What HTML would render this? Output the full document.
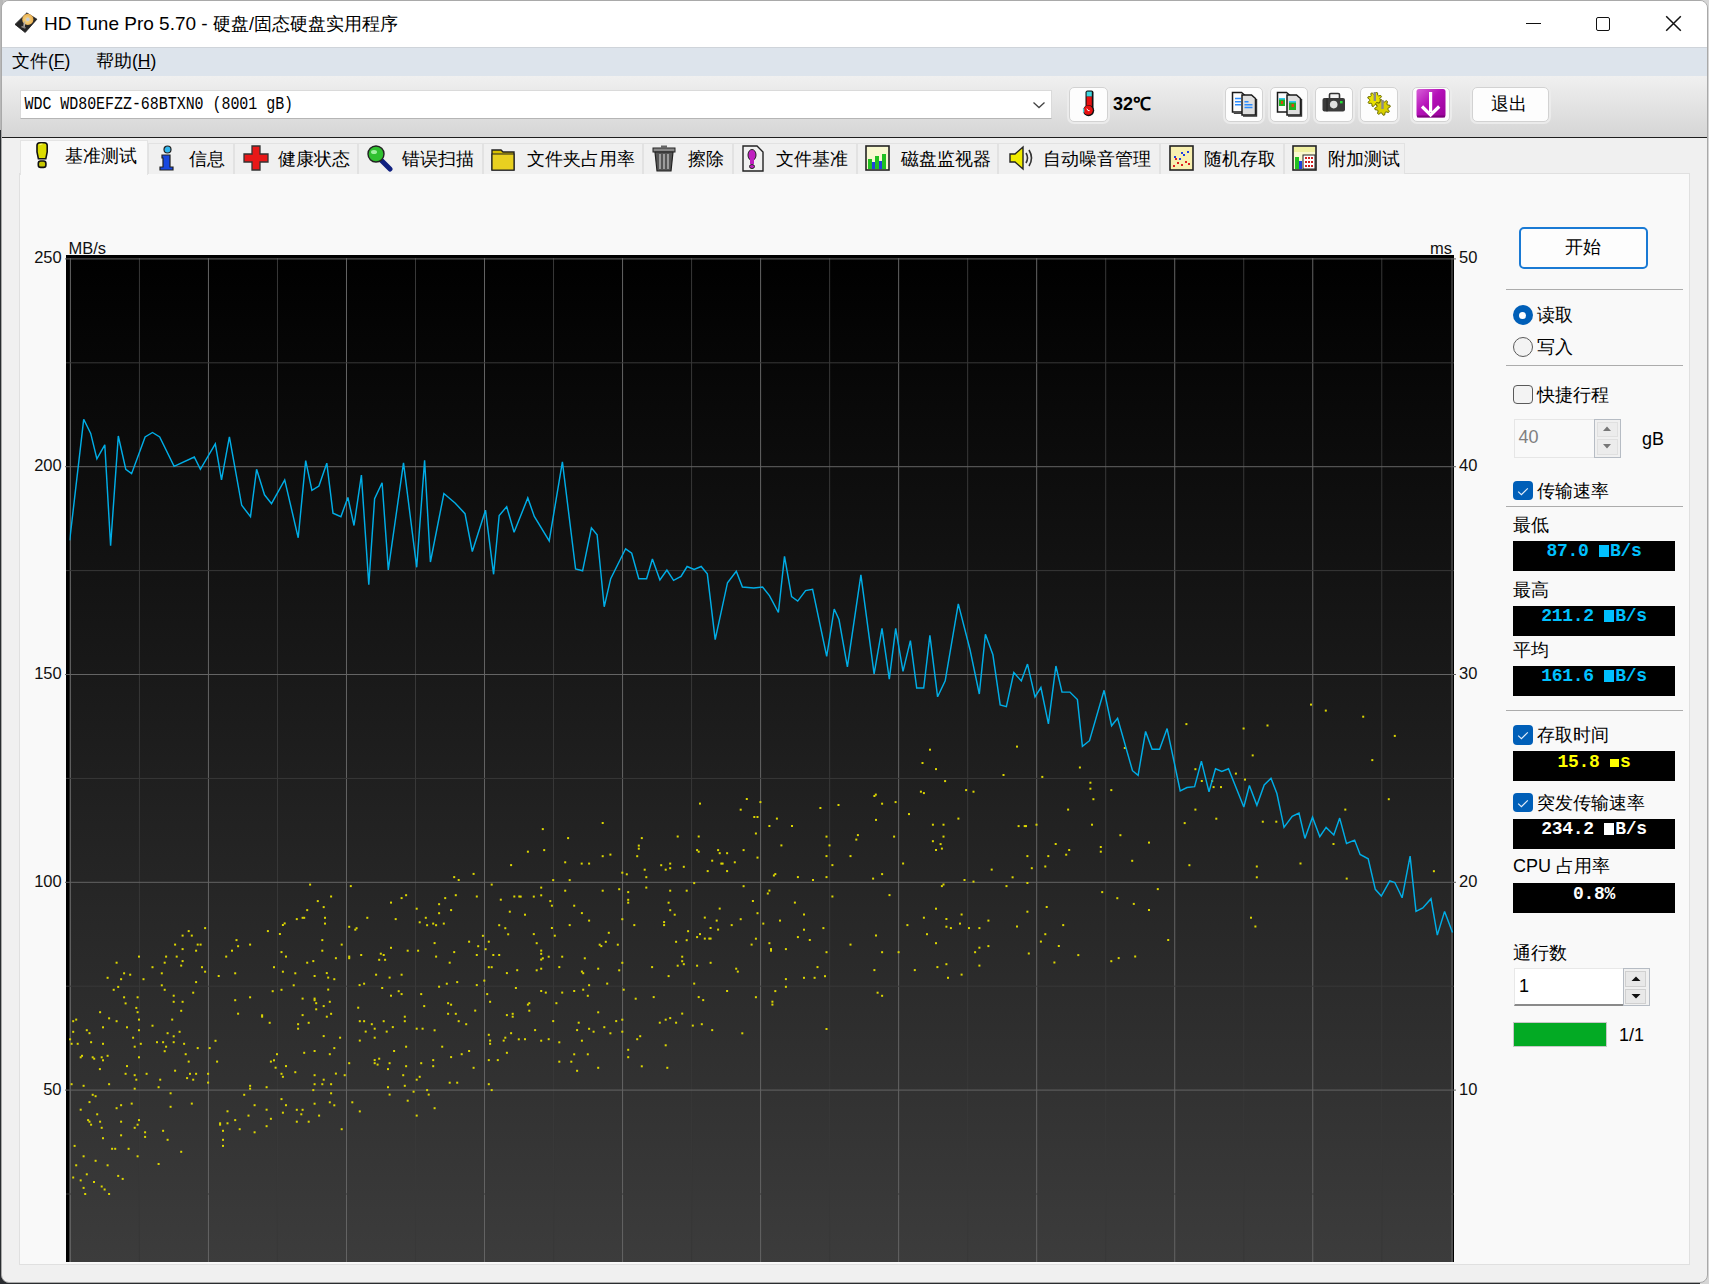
<!DOCTYPE html>
<html><head><meta charset="utf-8">
<style>
*{box-sizing:border-box;margin:0;padding:0}
html,body{width:1709px;height:1284px;overflow:hidden;background:#2a2d30}
body{position:relative;font-family:"Liberation Sans",sans-serif;color:#000}
.a{position:absolute}
.t{position:absolute;white-space:nowrap;line-height:1}
#win{position:absolute;left:1px;top:0;width:1707px;height:1283px;background:#f0f0f0;border:1px solid #a9a9a9;border-radius:8px;overflow:hidden}
#title{left:0;top:0;width:1705px;height:47px;background:#fff}
#menu{left:0;top:45.5px;width:1705px;height:29px;background:#dde4ec;border-top:1px solid #cfd4da}
#tool{left:0;top:75px;width:1705px;height:62px;background:linear-gradient(#f0f0f0,#d5d5d5)}
#tline{left:0;top:136px;width:1705px;height:1px;background:#1e1e1e}
.btn{position:absolute;background:#fdfdfd;border:1px solid #d2d2d2;border-radius:5px;box-shadow:0 0 0 2px rgba(236,236,236,.9)}
.tab{position:absolute;top:143px;height:31px;background:#f0f0f0;border:1px solid #e2e2e2;border-bottom:none}
.tab .t{font-size:18px;top:6px;color:#000}
#panel{left:18.5px;top:173px;width:1671px;height:1092px;background:#f9f9f9;border:1px solid #e0e0e0}
.sep{position:absolute;left:1505.5px;width:177px;height:1px;background:#acacac}
.lbl{font-size:18px}
.box{position:absolute;left:1513px;width:162px;height:30px;background:#000}
.val{position:absolute;left:0;width:162px;text-align:center;top:1.5px;font-family:"Liberation Mono",monospace;font-weight:bold;font-size:18px;white-space:nowrap;line-height:1;letter-spacing:-0.3px}
.blk{display:inline-block;width:10px;height:12px;background:currentColor;vertical-align:-0.5px;margin-right:0.8px}
.chk{position:absolute;left:1512.5px;width:20px;height:19.5px;border-radius:4px;background:#005fb8}
.chk svg{position:absolute;left:0;top:0}
.ax{position:absolute;font-size:16.5px;line-height:1;white-space:nowrap;color:#111}
</style></head><body>
<div class="a" style="left:0;top:0;width:1709px;height:3px;background:#c4c4c4"></div><div class="a" style="left:1700px;top:0;width:9px;height:1284px;background:#d6d6d6"></div><div class="a" style="left:0;top:0;width:3px;height:130px;background:#b8b8b8"></div>
<div id="win">
 <div id="title" class="a"></div>
 <div id="menu" class="a"></div>
 <div id="tool" class="a"></div>
 <div id="tline" class="a"></div>
</div>

<!-- title bar content -->
<svg class="a" style="left:12px;top:10px" width="28" height="26" viewBox="12 10 28 26">
 <defs><radialGradient id="dg" cx=".45" cy=".55" r=".6"><stop offset="0" stop-color="#f8e090"/><stop offset="1" stop-color="#e8a848"/></radialGradient></defs>
 <polygon points="15,24.4 26.8,12.9 36.9,19.2 25.2,32.5" fill="#262626" stroke="#1a1a1a" stroke-width=".8" stroke-linejoin="round"/>
 <circle cx="27.8" cy="19.4" r="5.6" fill="url(#dg)"/>
 <circle cx="27.8" cy="19.4" r="1.8" fill="#c8ccd8"/>
 <path d="M24.6 21.5l-.6 5.5" stroke="#b8b0a8" stroke-width="1.6"/>
 <path d="M21.5 26.5l4 1.6" stroke="#8a8480" stroke-width="1.6"/>
</svg>
<div class="t" style="left:44px;top:13.5px;font-size:19px;color:#000"><span class="m1">HD Tune Pro 5.70 -</span> <span class="m2" style="font-size:18px">硬盘/固态硬盘实用程序</span></div>
<!-- window controls -->
<div class="a" style="left:1526px;top:22.5px;width:15px;height:1.4px;background:#111"></div>
<div class="a" style="left:1595.5px;top:16.5px;width:14.5px;height:14.5px;border:1.5px solid #111;border-radius:2px"></div>
<svg class="a" style="left:1665px;top:15px" width="17" height="17" viewBox="0 0 17 17"><path d="M1.2 1.2L15.8 15.8M15.8 1.2L1.2 15.8" stroke="#111" stroke-width="1.5"/></svg>

<!-- menu -->
<div class="t" style="left:12px;top:53.2px;font-size:17.5px">文件(<u>F</u>)</div>
<div class="t" style="left:96px;top:53.2px;font-size:17.5px">帮助(<u>H</u>)</div>

<!-- toolbar -->
<div class="a" style="left:19.5px;top:90px;width:1032px;height:28.5px;background:#fff;border:1px solid #dadada;border-bottom-color:#b5b5b5"></div>
<div class="t" style="left:24.5px;top:96px;font-family:'Liberation Mono',monospace;font-size:15px;transform:scaleY(1.22);transform-origin:0 0;letter-spacing:-0.05px">WDC WD80EFZZ-68BTXN0 (8001 gB)</div>
<svg class="a" style="left:1031.5px;top:100px" width="14" height="10" viewBox="0 0 14 10"><path d="M1.5 2.5L7 7.5L12.5 2.5" stroke="#444" stroke-width="1.3" fill="none"/></svg>

<div class="btn" style="left:1069px;top:86.5px;width:39px;height:35px"></div>
<svg class="a" style="left:1078px;top:88px" width="24" height="32" viewBox="1078 88 24 32">
 <rect x="1085.5" y="90.5" width="8" height="20" rx="2" fill="#111"/>
 <rect x="1086.6" y="91.6" width="5.2" height="5" fill="#40d8e0"/>
 <rect x="1086.6" y="96.6" width="5.2" height="13" fill="#e81010"/>
 <circle cx="1088.6" cy="110.6" r="5.6" fill="#111"/>
 <circle cx="1088.2" cy="110.2" r="4.6" fill="#e81010"/>
 <path d="M1083.6 108.5v4" stroke="#40d8e0" stroke-width="1.4"/>
 <path d="M1086.8 108.6l1.2 2h1.6" stroke="#fff" stroke-width="1" fill="none"/>
</svg>
<div class="t" style="left:1113px;top:94.5px;font-size:18px;font-weight:bold">32℃</div>

<div class="btn" style="left:1224.5px;top:86.5px;width:38px;height:35px"></div>
<div class="btn" style="left:1269.5px;top:86.5px;width:38px;height:35px"></div>
<div class="btn" style="left:1314.5px;top:86.5px;width:38px;height:35px"></div>
<div class="btn" style="left:1359.5px;top:86.5px;width:38px;height:35px"></div>
<div class="btn" style="left:1411.5px;top:86.5px;width:38.5px;height:35px"></div>
<div class="btn" style="left:1471.5px;top:86.5px;width:77px;height:35px"></div>
<div class="t" style="left:1491px;top:95px;font-size:18px">退出</div>
<!-- copy icon -->
<svg class="a" style="left:1228px;top:88px" width="32" height="32" viewBox="1228 88 32 32">
 <path d="M1232.5 92.5h9l3 2.5v17h-12z" fill="#fbfbfb" stroke="#1a1a1a" stroke-width="1.5"/>
 <path d="M1233 112.5h12.5v-17" fill="none" stroke="#444" stroke-width="1.2" transform="translate(0.8,0.8)"/>
 <path d="M1242 95h9.5l4 3.5v16.5h-13.5z" fill="#dedede" stroke="#1a1a1a" stroke-width="1.5"/>
 <path d="M1243 116h13.5v-17" fill="none" stroke="#333" stroke-width="1.4"/>
 <path d="M1235 98.5h6M1235 101.7h6M1235 104.7h6M1244.5 101.7h4M1244.5 104.7h8M1244.5 107.6h8" stroke="#2a8cff" stroke-width="1.5"/>
</svg>
<svg class="a" style="left:1273px;top:88px" width="32" height="32" viewBox="1273 88 32 32">
 <path d="M1277.5 92.5h9l3 2.5v17h-12z" fill="#fbfbfb" stroke="#1a1a1a" stroke-width="1.5"/>
 <path d="M1287 95h9.5l4 3.5v16.5h-13.5z" fill="#dedede" stroke="#1a1a1a" stroke-width="1.5"/>
 <path d="M1288 116h13.5v-17" fill="none" stroke="#333" stroke-width="1.4"/>
 <rect x="1279" y="98" width="6" height="8" fill="#20b020"/><rect x="1279" y="98" width="6" height="1.6" fill="#30c8f0"/><rect x="1281" y="101" width="2" height="3" fill="#e04010"/>
 <rect x="1289" y="101" width="7" height="9" fill="#20b020"/><rect x="1289" y="101" width="7" height="1.6" fill="#30c8f0"/><rect x="1291.5" y="104" width="2.5" height="3" fill="#e04010"/>
</svg>
<svg class="a" style="left:1318px;top:88px" width="32" height="28" viewBox="1318 88 32 28">
 <path d="M1329.5 98v-3.2q0-1.3 1.3-1.3h7.4q1.3 0 1.3 1.3v3.2" fill="#f4f4f4" stroke="#333" stroke-width="1.6"/>
 <rect x="1322.5" y="98" width="22.5" height="13.5" rx="2" fill="#3a3a3a"/>
 <rect x="1326.5" y="98" width="1" height="13.5" fill="#222"/>
 <circle cx="1333.7" cy="104.6" r="3.8" fill="#dedede"/>
 <rect x="1340" y="101" width="2.6" height="2.4" fill="#22dd33"/>
</svg>
<svg class="a" style="left:1363px;top:88px" width="32" height="32" viewBox="1363 88 32 32">
 <polygon points="1381.86,100.93 1381.44,102.28 1379.11,102.40 1378.46,103.19 1378.78,105.50 1377.53,106.16 1375.80,104.60 1374.78,104.70 1373.37,106.56 1372.02,106.14 1371.90,103.81 1371.11,103.16 1368.80,103.48 1368.14,102.23 1369.70,100.50 1369.60,99.48 1367.74,98.07 1368.16,96.72 1370.49,96.60 1371.14,95.81 1370.82,93.50 1372.07,92.84 1373.80,94.40 1374.82,94.30 1376.23,92.44 1377.58,92.86 1377.70,95.19 1378.49,95.84 1380.80,95.52 1381.46,96.77 1379.90,98.50 1380.00,99.52" fill="#e8e000" stroke="#6a6a00" stroke-width="1"/>
 <polygon points="1389.35,111.24 1388.48,112.50 1386.01,111.86 1385.09,112.46 1384.70,114.98 1383.19,115.27 1381.90,113.07 1380.83,112.84 1378.76,114.35 1377.50,113.48 1378.14,111.01 1377.54,110.09 1375.02,109.70 1374.73,108.19 1376.93,106.90 1377.16,105.83 1375.65,103.76 1376.52,102.50 1378.99,103.14 1379.91,102.54 1380.30,100.02 1381.81,99.73 1383.10,101.93 1384.17,102.16 1386.24,100.65 1387.50,101.52 1386.86,103.99 1387.46,104.91 1389.98,105.30 1390.27,106.81 1388.07,108.10 1387.84,109.17" fill="#d8d000" stroke="#6a6a00" stroke-width="1"/>
 <rect x="1373.6" y="92" width="2.4" height="9" fill="#8a8a8a"/><rect x="1381.3" y="100" width="2.4" height="9" fill="#8a8a8a"/>
</svg>
<svg class="a" style="left:1414px;top:87px" width="34" height="33" viewBox="1414 87 34 33">
 <defs><linearGradient id="mg" x1="0" y1="0" x2="1" y2="1"><stop offset="0" stop-color="#d860d8"/><stop offset=".45" stop-color="#b410b8"/><stop offset="1" stop-color="#980098"/></linearGradient></defs>
 <rect x="1416.5" y="89" width="29" height="28.5" rx="2.5" fill="url(#mg)"/>
 <rect x="1417" y="115.5" width="28" height="2" fill="#6a006a" opacity=".7"/>
 <path d="M1430.6 92v20M1422 106.5l8.6 8.5 8.6-8.5" stroke="#fff" stroke-width="3.2" fill="none" stroke-linejoin="miter"/>
</svg>

<!-- tabs -->
<div id="panel" class="a"></div>
<div class="a" style="left:19.5px;top:140px;width:128.5px;height:35px;background:#f9f9f9;border:1px solid #e4e4e4;border-bottom:none"></div>
<div class="tab" style="left:148px;width:85.5px"></div>
<div class="tab" style="left:233.5px;width:124.5px"></div>
<div class="tab" style="left:358px;width:125px"></div>
<div class="tab" style="left:483px;width:160px"></div>
<div class="tab" style="left:643px;width:90px"></div>
<div class="tab" style="left:733px;width:124px"></div>
<div class="tab" style="left:857px;width:141px"></div>
<div class="tab" style="left:998px;width:162px"></div>
<div class="tab" style="left:1160px;width:124px"></div>
<div class="tab" style="left:1284px;width:121px"></div>

<div class="t" style="left:65px;top:147px;font-size:18px">基准测试</div>
<div class="t" style="left:189px;top:150px;font-size:18px">信息</div>
<div class="t" style="left:278px;top:150px;font-size:18px">健康状态</div>
<div class="t" style="left:402px;top:150px;font-size:18px">错误扫描</div>
<div class="t" style="left:527px;top:150px;font-size:18px">文件夹占用率</div>
<div class="t" style="left:688px;top:150px;font-size:18px">擦除</div>
<div class="t" style="left:776px;top:150px;font-size:18px">文件基准</div>
<div class="t" style="left:901px;top:150px;font-size:18px">磁盘监视器</div>
<div class="t" style="left:1043px;top:150px;font-size:18px">自动噪音管理</div>
<div class="t" style="left:1204px;top:150px;font-size:18px">随机存取</div>
<div class="t" style="left:1328px;top:150px;font-size:18px">附加测试</div>

<!-- tab icons -->
<svg class="a" style="left:32px;top:140px" width="20" height="30" viewBox="32 140 20 30">
 <path d="M37 145.5q0-2.8 2.8-2.8h4.6q2.8 0 2.8 2.8v6.5l-1.4 6.8h-7.4l-1.4-6.8z" fill="#dcdc00" stroke="#111" stroke-width="1.6"/>
 <path d="M39.5 145q1-1 3-1" stroke="#f8f880" stroke-width="1.2" fill="none"/>
 <rect x="38.3" y="161" width="7.6" height="6.4" rx="2.4" fill="#c8c800" stroke="#111" stroke-width="1.6"/>
</svg>
<svg class="a" style="left:158px;top:145px" width="18" height="27" viewBox="0 0 18 27">
 <circle cx="9.5" cy="4.5" r="3.5" fill="#30b8f0" stroke="#222" stroke-width="1.2"/>
 <path d="M4 10h8v12h3v3H2v-3h3v-9H4z" fill="#1848e0" stroke="#222" stroke-width="1.2"/>
</svg>
<svg class="a" style="left:242px;top:145px" width="28" height="27" viewBox="0 0 28 27">
 <path d="M10 1h8v8h8v8h-8v8h-8v-8H2V9h8z" fill="#e81818" stroke="#333" stroke-width="1.3"/>
</svg>
<svg class="a" style="left:366px;top:144px" width="28" height="28" viewBox="0 0 28 28">
 <path d="M14 15l10 10" stroke="#102080" stroke-width="5" stroke-linecap="round"/>
 <circle cx="10" cy="10" r="8" fill="#30c030" stroke="#222" stroke-width="1.4"/>
 <ellipse cx="8" cy="8" rx="3" ry="2" fill="#a0f0a0"/>
</svg>
<svg class="a" style="left:490px;top:146px" width="28" height="27" viewBox="0 0 28 27">
 <path d="M2 4h9l2 2h11v18H2z" fill="#d8c000" stroke="#222" stroke-width="1.4"/>
 <path d="M2 8h22v16H2z" fill="#e8d020" stroke="#222" stroke-width="1.2"/>
</svg>
<svg class="a" style="left:652px;top:145px" width="24" height="28" viewBox="0 0 24 28">
 <rect x="1" y="3" width="22" height="4" fill="#888" stroke="#222" stroke-width="1"/>
 <rect x="9" y="0.5" width="6" height="3" fill="#666"/>
 <path d="M3 7h18l-2 19H5z" fill="#555" stroke="#222" stroke-width="1.2"/>
 <path d="M8 9v15M12 9v15M16 9v15" stroke="#bbb" stroke-width="1.4"/>
</svg>
<svg class="a" style="left:741px;top:145px" width="24" height="28" viewBox="0 0 24 28">
 <path d="M2 1h14l6 6v19H2z" fill="#f0f0f0" stroke="#222" stroke-width="1.4"/>
 <ellipse cx="11" cy="10" rx="4" ry="5.5" fill="#c020c0" stroke="#222" stroke-width="1"/>
 <rect x="9" y="14" width="4" height="5" fill="#c020c0"/>
 <ellipse cx="11" cy="21.5" rx="2.5" ry="2" fill="#c020c0" stroke="#222" stroke-width="1"/>
</svg>
<svg class="a" style="left:865px;top:145px" width="26" height="27" viewBox="0 0 26 27">
 <rect x="1" y="1" width="23" height="24" fill="#f8f8d0" stroke="#222" stroke-width="1.6"/>
 <rect x="3" y="14" width="4" height="10" fill="#20c020"/><rect x="7" y="17" width="3" height="7" fill="#2040e0"/>
 <rect x="10" y="11" width="4" height="13" fill="#20c020"/><rect x="14" y="16" width="3" height="8" fill="#2040e0"/>
 <rect x="17" y="9" width="4" height="15" fill="#20c020"/>
</svg>
<svg class="a" style="left:1008px;top:144px" width="28" height="28" viewBox="0 0 28 28">
 <path d="M2 10h5l8-7v22l-8-7H2z" fill="#f0ec00" stroke="#222" stroke-width="1.4"/>
 <path d="M18 9q3 5 0 10M21 6q5 8 0 16" stroke="#333" stroke-width="1.6" fill="none"/>
</svg>
<svg class="a" style="left:1169px;top:145px" width="26" height="27" viewBox="0 0 26 27">
 <rect x="1" y="1" width="23" height="24" fill="#f8f0b0" stroke="#222" stroke-width="1.6"/>
 <g fill="#e02020"><rect x="4" y="20" width="2" height="2"/><rect x="8" y="17" width="2" height="2"/><rect x="12" y="19" width="2" height="2"/><rect x="16" y="16" width="2" height="2"/><rect x="19" y="18" width="2" height="2"/><rect x="6" y="13" width="2" height="2"/></g>
 <g fill="#2040e0"><rect x="5" y="11" width="2" height="2"/><rect x="10" y="13" width="2" height="2"/><rect x="14" y="9" width="2" height="2"/><rect x="18" y="6" width="2" height="2"/><rect x="12" y="7" width="2" height="2"/></g>
</svg>
<svg class="a" style="left:1292px;top:145px" width="26" height="27" viewBox="0 0 26 27">
 <rect x="1" y="1" width="23" height="24" fill="#f8f8d0" stroke="#222" stroke-width="1.6"/>
 <rect x="2" y="2" width="21" height="5" fill="#f0f0a0"/>
 <rect x="3" y="12" width="4" height="12" fill="#20c020"/><rect x="7" y="16" width="3" height="8" fill="#2040e0"/>
 <rect x="11" y="10" width="12" height="14" fill="#fff" stroke="#222" stroke-width="1"/>
 <g fill="#d02020"><rect x="13" y="12" width="2" height="2"/><rect x="16" y="12" width="2" height="2"/><rect x="19" y="12" width="2" height="2"/><rect x="13" y="16" width="2" height="2"/><rect x="16" y="16" width="2" height="2"/><rect x="19" y="16" width="2" height="2"/><rect x="13" y="20" width="2" height="2"/><rect x="16" y="20" width="2" height="2"/><rect x="19" y="20" width="2" height="2"/></g>
</svg>

<!-- chart -->
<svg width="1709" height="1284" viewBox="0 0 1709 1284" style="position:absolute;left:0;top:0">
<defs><linearGradient id="cg" x1="0" y1="0" x2="0" y2="1"><stop offset="0" stop-color="#000"/><stop offset="1" stop-color="#3c3c3c"/></linearGradient><clipPath id="pc"><rect x="69.5" y="258" width="1384.5" height="1004"/></clipPath></defs>
<rect x="66" y="255" width="1388" height="1007" fill="url(#cg)" shape-rendering="crispEdges"/>
<g shape-rendering="crispEdges"><rect x="66" y="255" width="3" height="1007" fill="#000"/><rect x="66" y="255" width="1388" height="3" fill="#000"/><rect x="1453" y="255" width="1" height="1007" fill="#000"/></g>
<g><rect x="69.90" y="258" width="1" height="1004" fill="#646464"/><rect x="138.92" y="258" width="1" height="1004" fill="#383838"/><rect x="207.94" y="258" width="1" height="1004" fill="#646464"/><rect x="276.96" y="258" width="1" height="1004" fill="#383838"/><rect x="345.98" y="258" width="1" height="1004" fill="#646464"/><rect x="415.00" y="258" width="1" height="1004" fill="#383838"/><rect x="484.02" y="258" width="1" height="1004" fill="#646464"/><rect x="553.04" y="258" width="1" height="1004" fill="#383838"/><rect x="622.06" y="258" width="1" height="1004" fill="#646464"/><rect x="691.08" y="258" width="1" height="1004" fill="#383838"/><rect x="760.10" y="258" width="1" height="1004" fill="#646464"/><rect x="829.12" y="258" width="1" height="1004" fill="#383838"/><rect x="898.14" y="258" width="1" height="1004" fill="#646464"/><rect x="967.16" y="258" width="1" height="1004" fill="#383838"/><rect x="1036.18" y="258" width="1" height="1004" fill="#646464"/><rect x="1105.20" y="258" width="1" height="1004" fill="#383838"/><rect x="1174.22" y="258" width="1" height="1004" fill="#646464"/><rect x="1243.24" y="258" width="1" height="1004" fill="#383838"/><rect x="1312.26" y="258" width="1" height="1004" fill="#646464"/><rect x="1381.28" y="258" width="1" height="1004" fill="#383838"/><rect x="1451.50" y="258" width="1" height="1004" fill="#646464"/><rect x="65" y="258.40" width="1391" height="1" fill="#646464"/><rect x="66" y="362.30" width="1388" height="1" fill="#383838"/><rect x="65" y="466.20" width="1391" height="1" fill="#646464"/><rect x="66" y="570.10" width="1388" height="1" fill="#383838"/><rect x="65" y="674.00" width="1391" height="1" fill="#646464"/><rect x="66" y="777.90" width="1388" height="1" fill="#383838"/><rect x="65" y="881.80" width="1391" height="1" fill="#646464"/><rect x="66" y="985.70" width="1388" height="1" fill="#383838"/><rect x="65" y="1089.60" width="1391" height="1" fill="#646464"/><rect x="66" y="1193.50" width="1388" height="1" fill="#383838"/></g>
<g fill="#dcd600"><rect x="283.7" y="922.4" width="2" height="2"/><rect x="281.9" y="924.0" width="2" height="2"/><rect x="204.1" y="927.1" width="2" height="2"/><rect x="187.7" y="930.1" width="2" height="2"/><rect x="266.9" y="930.1" width="2" height="2"/><rect x="181.6" y="934.6" width="2" height="2"/><rect x="190.8" y="934.6" width="2" height="2"/><rect x="278.9" y="933.0" width="2" height="2"/><rect x="235.5" y="939.1" width="2" height="2"/><rect x="174.1" y="943.6" width="2" height="2"/><rect x="196.7" y="943.6" width="2" height="2"/><rect x="199.6" y="943.6" width="2" height="2"/><rect x="249.1" y="943.6" width="2" height="2"/><rect x="237.1" y="945.2" width="2" height="2"/><rect x="181.6" y="948.1" width="2" height="2"/><rect x="195.1" y="949.7" width="2" height="2"/><rect x="231.0" y="949.7" width="2" height="2"/><rect x="280.5" y="951.1" width="2" height="2"/><rect x="285.0" y="955.6" width="2" height="2"/><rect x="138.0" y="955.6" width="2" height="2"/><rect x="165.1" y="955.6" width="2" height="2"/><rect x="175.7" y="955.6" width="2" height="2"/><rect x="225.2" y="955.6" width="2" height="2"/><rect x="115.6" y="961.7" width="2" height="2"/><rect x="163.7" y="961.7" width="2" height="2"/><rect x="181.6" y="960.1" width="2" height="2"/><rect x="180.2" y="964.6" width="2" height="2"/><rect x="151.5" y="966.2" width="2" height="2"/><rect x="201.0" y="966.2" width="2" height="2"/><rect x="273.0" y="966.2" width="2" height="2"/><rect x="204.1" y="970.7" width="2" height="2"/><rect x="160.8" y="972.3" width="2" height="2"/><rect x="123.1" y="972.3" width="2" height="2"/><rect x="129.2" y="973.7" width="2" height="2"/><rect x="234.2" y="972.3" width="2" height="2"/><rect x="281.9" y="970.7" width="2" height="2"/><rect x="294.3" y="972.3" width="2" height="2"/><rect x="106.6" y="976.8" width="2" height="2"/><rect x="120.1" y="978.2" width="2" height="2"/><rect x="142.5" y="978.2" width="2" height="2"/><rect x="217.7" y="975.0" width="2" height="2"/><rect x="195.1" y="981.1" width="2" height="2"/><rect x="292.7" y="984.3" width="2" height="2"/><rect x="160.8" y="984.3" width="2" height="2"/><rect x="117.2" y="985.9" width="2" height="2"/><rect x="112.7" y="988.8" width="2" height="2"/><rect x="163.7" y="988.8" width="2" height="2"/><rect x="271.7" y="990.2" width="2" height="2"/><rect x="280.5" y="988.8" width="2" height="2"/><rect x="192.2" y="991.7" width="2" height="2"/><rect x="123.1" y="996.3" width="2" height="2"/><rect x="136.6" y="996.3" width="2" height="2"/><rect x="172.7" y="994.7" width="2" height="2"/><rect x="249.1" y="996.3" width="2" height="2"/><rect x="234.2" y="999.2" width="2" height="2"/><rect x="172.7" y="1000.8" width="2" height="2"/><rect x="181.6" y="1000.8" width="2" height="2"/><rect x="124.6" y="1002.4" width="2" height="2"/><rect x="135.3" y="1006.9" width="2" height="2"/><rect x="180.2" y="1009.8" width="2" height="2"/><rect x="99.1" y="1011.2" width="2" height="2"/><rect x="136.6" y="1011.2" width="2" height="2"/><rect x="237.1" y="1012.7" width="2" height="2"/><rect x="261.1" y="1014.3" width="2" height="2"/><rect x="261.1" y="1015.7" width="2" height="2"/><rect x="108.1" y="1017.3" width="2" height="2"/><rect x="138.0" y="1018.6" width="2" height="2"/><rect x="171.2" y="1018.6" width="2" height="2"/><rect x="72.2" y="1020.2" width="2" height="2"/><rect x="75.2" y="1018.6" width="2" height="2"/><rect x="115.6" y="1020.2" width="2" height="2"/><rect x="268.7" y="1021.8" width="2" height="2"/><rect x="102.0" y="1026.3" width="2" height="2"/><rect x="126.0" y="1026.3" width="2" height="2"/><rect x="151.5" y="1024.7" width="2" height="2"/><rect x="85.8" y="1029.2" width="2" height="2"/><rect x="72.2" y="1030.8" width="2" height="2"/><rect x="88.5" y="1032.2" width="2" height="2"/><rect x="138.0" y="1029.2" width="2" height="2"/><rect x="166.6" y="1032.2" width="2" height="2"/><rect x="178.6" y="1030.8" width="2" height="2"/><rect x="172.7" y="1035.3" width="2" height="2"/><rect x="132.1" y="1036.7" width="2" height="2"/><rect x="69.1" y="1038.3" width="2" height="2"/><rect x="214.5" y="1039.8" width="2" height="2"/><rect x="70.6" y="1042.8" width="2" height="2"/><rect x="76.7" y="1042.8" width="2" height="2"/><rect x="90.1" y="1041.2" width="2" height="2"/><rect x="102.0" y="1042.8" width="2" height="2"/><rect x="139.8" y="1042.8" width="2" height="2"/><rect x="156.0" y="1041.2" width="2" height="2"/><rect x="162.1" y="1041.2" width="2" height="2"/><rect x="172.7" y="1041.2" width="2" height="2"/><rect x="183.1" y="1042.8" width="2" height="2"/><rect x="133.7" y="1045.7" width="2" height="2"/><rect x="165.1" y="1045.7" width="2" height="2"/><rect x="196.7" y="1047.1" width="2" height="2"/><rect x="208.7" y="1047.1" width="2" height="2"/><rect x="163.7" y="1050.2" width="2" height="2"/><rect x="184.7" y="1053.2" width="2" height="2"/><rect x="276.0" y="1053.2" width="2" height="2"/><rect x="79.7" y="1056.3" width="2" height="2"/><rect x="81.0" y="1054.8" width="2" height="2"/><rect x="91.7" y="1056.3" width="2" height="2"/><rect x="93.2" y="1057.7" width="2" height="2"/><rect x="100.7" y="1056.3" width="2" height="2"/><rect x="102.0" y="1059.3" width="2" height="2"/><rect x="106.6" y="1054.8" width="2" height="2"/><rect x="138.0" y="1056.3" width="2" height="2"/><rect x="269.9" y="1060.6" width="2" height="2"/><rect x="273.0" y="1059.3" width="2" height="2"/><rect x="216.1" y="1060.6" width="2" height="2"/><rect x="187.7" y="1060.6" width="2" height="2"/><rect x="285.0" y="1065.1" width="2" height="2"/><rect x="98.9" y="1068.1" width="2" height="2"/><rect x="126.0" y="1065.1" width="2" height="2"/><rect x="274.6" y="1066.7" width="2" height="2"/><rect x="174.1" y="1069.7" width="2" height="2"/><rect x="294.3" y="1071.2" width="2" height="2"/><rect x="124.6" y="1072.8" width="2" height="2"/><rect x="145.6" y="1072.8" width="2" height="2"/><rect x="133.7" y="1074.2" width="2" height="2"/><rect x="189.0" y="1072.8" width="2" height="2"/><rect x="195.1" y="1072.8" width="2" height="2"/><rect x="207.1" y="1072.8" width="2" height="2"/><rect x="280.5" y="1072.8" width="2" height="2"/><rect x="281.9" y="1075.8" width="2" height="2"/><rect x="186.1" y="1077.1" width="2" height="2"/><rect x="192.2" y="1078.7" width="2" height="2"/><rect x="135.3" y="1078.7" width="2" height="2"/><rect x="159.2" y="1078.7" width="2" height="2"/><rect x="70.6" y="1083.2" width="2" height="2"/><rect x="82.6" y="1084.8" width="2" height="2"/><rect x="108.1" y="1083.2" width="2" height="2"/><rect x="207.1" y="1081.6" width="2" height="2"/><rect x="249.1" y="1084.8" width="2" height="2"/><rect x="249.1" y="1087.7" width="2" height="2"/><rect x="265.6" y="1086.2" width="2" height="2"/><rect x="133.7" y="1087.7" width="2" height="2"/><rect x="157.6" y="1086.2" width="2" height="2"/><rect x="91.7" y="1093.8" width="2" height="2"/><rect x="94.6" y="1095.2" width="2" height="2"/><rect x="169.6" y="1092.3" width="2" height="2"/><rect x="243.2" y="1093.8" width="2" height="2"/><rect x="88.5" y="1101.1" width="2" height="2"/><rect x="115.6" y="1107.2" width="2" height="2"/><rect x="120.1" y="1104.2" width="2" height="2"/><rect x="130.7" y="1102.6" width="2" height="2"/><rect x="169.6" y="1105.8" width="2" height="2"/><rect x="190.8" y="1102.6" width="2" height="2"/><rect x="253.6" y="1104.2" width="2" height="2"/><rect x="280.5" y="1098.1" width="2" height="2"/><rect x="285.0" y="1104.2" width="2" height="2"/><rect x="79.7" y="1108.7" width="2" height="2"/><rect x="226.5" y="1110.3" width="2" height="2"/><rect x="265.6" y="1108.7" width="2" height="2"/><rect x="281.9" y="1111.7" width="2" height="2"/><rect x="96.2" y="1113.3" width="2" height="2"/><rect x="247.5" y="1114.6" width="2" height="2"/><rect x="87.1" y="1119.1" width="2" height="2"/><rect x="88.5" y="1120.7" width="2" height="2"/><rect x="99.1" y="1120.7" width="2" height="2"/><rect x="120.1" y="1120.7" width="2" height="2"/><rect x="138.0" y="1119.1" width="2" height="2"/><rect x="269.9" y="1117.8" width="2" height="2"/><rect x="90.1" y="1123.7" width="2" height="2"/><rect x="136.6" y="1123.7" width="2" height="2"/><rect x="133.7" y="1126.8" width="2" height="2"/><rect x="100.7" y="1126.8" width="2" height="2"/><rect x="219.1" y="1122.3" width="2" height="2"/><rect x="219.1" y="1123.7" width="2" height="2"/><rect x="226.5" y="1122.3" width="2" height="2"/><rect x="234.2" y="1119.1" width="2" height="2"/><rect x="265.6" y="1125.2" width="2" height="2"/><rect x="222.0" y="1129.8" width="2" height="2"/><rect x="238.7" y="1128.2" width="2" height="2"/><rect x="144.1" y="1131.3" width="2" height="2"/><rect x="162.1" y="1129.8" width="2" height="2"/><rect x="253.6" y="1131.3" width="2" height="2"/><rect x="102.0" y="1137.2" width="2" height="2"/><rect x="120.1" y="1134.3" width="2" height="2"/><rect x="144.1" y="1135.9" width="2" height="2"/><rect x="166.6" y="1138.8" width="2" height="2"/><rect x="222.0" y="1138.8" width="2" height="2"/><rect x="73.6" y="1144.9" width="2" height="2"/><rect x="222.0" y="1144.9" width="2" height="2"/><rect x="111.1" y="1147.8" width="2" height="2"/><rect x="114.2" y="1147.8" width="2" height="2"/><rect x="127.6" y="1147.8" width="2" height="2"/><rect x="180.2" y="1150.8" width="2" height="2"/><rect x="82.6" y="1155.3" width="2" height="2"/><rect x="136.6" y="1155.3" width="2" height="2"/><rect x="94.6" y="1159.8" width="2" height="2"/><rect x="75.2" y="1164.3" width="2" height="2"/><rect x="106.6" y="1164.3" width="2" height="2"/><rect x="157.6" y="1163.0" width="2" height="2"/><rect x="85.8" y="1173.3" width="2" height="2"/><rect x="72.2" y="1176.5" width="2" height="2"/><rect x="117.2" y="1174.9" width="2" height="2"/><rect x="121.7" y="1177.9" width="2" height="2"/><rect x="79.7" y="1179.4" width="2" height="2"/><rect x="93.0" y="1181.0" width="2" height="2"/><rect x="100.7" y="1185.5" width="2" height="2"/><rect x="82.6" y="1186.9" width="2" height="2"/><rect x="103.6" y="1188.5" width="2" height="2"/><rect x="84.2" y="1193.0" width="2" height="2"/><rect x="108.1" y="1193.0" width="2" height="2"/><rect x="510.1" y="864.1" width="2" height="2"/><rect x="472.6" y="872.9" width="2" height="2"/><rect x="453.2" y="876.1" width="2" height="2"/><rect x="457.7" y="879.0" width="2" height="2"/><rect x="309.1" y="883.6" width="2" height="2"/><rect x="349.8" y="885.1" width="2" height="2"/><rect x="490.7" y="883.6" width="2" height="2"/><rect x="330.1" y="895.5" width="2" height="2"/><rect x="405.1" y="894.2" width="2" height="2"/><rect x="400.6" y="897.1" width="2" height="2"/><rect x="454.8" y="894.2" width="2" height="2"/><rect x="444.2" y="897.1" width="2" height="2"/><rect x="475.8" y="895.5" width="2" height="2"/><rect x="513.3" y="895.5" width="2" height="2"/><rect x="518.3" y="895.5" width="2" height="2"/><rect x="499.8" y="898.7" width="2" height="2"/><rect x="316.8" y="900.1" width="2" height="2"/><rect x="390.0" y="901.6" width="2" height="2"/><rect x="322.7" y="906.1" width="2" height="2"/><rect x="415.7" y="907.7" width="2" height="2"/><rect x="438.1" y="903.2" width="2" height="2"/><rect x="306.2" y="909.1" width="2" height="2"/><rect x="450.1" y="909.1" width="2" height="2"/><rect x="438.1" y="912.2" width="2" height="2"/><rect x="508.8" y="910.7" width="2" height="2"/><rect x="295.8" y="918.1" width="2" height="2"/><rect x="301.6" y="916.8" width="2" height="2"/><rect x="303.2" y="916.8" width="2" height="2"/><rect x="324.0" y="916.8" width="2" height="2"/><rect x="366.3" y="916.8" width="2" height="2"/><rect x="394.7" y="918.1" width="2" height="2"/><rect x="424.8" y="916.8" width="2" height="2"/><rect x="324.0" y="922.6" width="2" height="2"/><rect x="418.7" y="921.3" width="2" height="2"/><rect x="426.1" y="924.2" width="2" height="2"/><rect x="432.2" y="922.6" width="2" height="2"/><rect x="435.1" y="924.2" width="2" height="2"/><rect x="442.8" y="922.6" width="2" height="2"/><rect x="498.2" y="924.2" width="2" height="2"/><rect x="348.2" y="925.8" width="2" height="2"/><rect x="355.6" y="927.2" width="2" height="2"/><rect x="354.3" y="928.7" width="2" height="2"/><rect x="504.3" y="927.2" width="2" height="2"/><rect x="507.2" y="933.3" width="2" height="2"/><rect x="481.9" y="934.8" width="2" height="2"/><rect x="321.3" y="939.1" width="2" height="2"/><rect x="340.7" y="943.6" width="2" height="2"/><rect x="468.1" y="940.7" width="2" height="2"/><rect x="487.8" y="940.7" width="2" height="2"/><rect x="433.6" y="942.1" width="2" height="2"/><rect x="477.2" y="945.2" width="2" height="2"/><rect x="484.6" y="948.2" width="2" height="2"/><rect x="321.3" y="949.7" width="2" height="2"/><rect x="390.0" y="946.8" width="2" height="2"/><rect x="406.7" y="949.7" width="2" height="2"/><rect x="417.1" y="949.7" width="2" height="2"/><rect x="453.2" y="951.1" width="2" height="2"/><rect x="348.2" y="955.6" width="2" height="2"/><rect x="348.2" y="957.2" width="2" height="2"/><rect x="360.2" y="954.0" width="2" height="2"/><rect x="379.8" y="952.7" width="2" height="2"/><rect x="382.7" y="954.0" width="2" height="2"/><rect x="334.9" y="957.2" width="2" height="2"/><rect x="378.2" y="958.8" width="2" height="2"/><rect x="384.1" y="958.8" width="2" height="2"/><rect x="435.1" y="955.6" width="2" height="2"/><rect x="475.8" y="954.0" width="2" height="2"/><rect x="492.3" y="954.0" width="2" height="2"/><rect x="498.2" y="954.0" width="2" height="2"/><rect x="306.2" y="961.7" width="2" height="2"/><rect x="312.3" y="960.1" width="2" height="2"/><rect x="448.7" y="961.7" width="2" height="2"/><rect x="487.8" y="966.2" width="2" height="2"/><rect x="490.7" y="966.2" width="2" height="2"/><rect x="325.8" y="972.1" width="2" height="2"/><rect x="313.6" y="975.0" width="2" height="2"/><rect x="327.2" y="976.6" width="2" height="2"/><rect x="333.3" y="978.2" width="2" height="2"/><rect x="375.1" y="973.7" width="2" height="2"/><rect x="388.6" y="976.6" width="2" height="2"/><rect x="400.6" y="973.7" width="2" height="2"/><rect x="505.9" y="972.1" width="2" height="2"/><rect x="516.2" y="969.2" width="2" height="2"/><rect x="358.6" y="984.1" width="2" height="2"/><rect x="363.1" y="982.7" width="2" height="2"/><rect x="445.8" y="982.7" width="2" height="2"/><rect x="456.2" y="981.1" width="2" height="2"/><rect x="475.8" y="984.1" width="2" height="2"/><rect x="483.3" y="979.6" width="2" height="2"/><rect x="438.1" y="985.7" width="2" height="2"/><rect x="381.2" y="987.0" width="2" height="2"/><rect x="514.9" y="987.0" width="2" height="2"/><rect x="327.2" y="988.6" width="2" height="2"/><rect x="397.7" y="990.2" width="2" height="2"/><rect x="400.6" y="993.1" width="2" height="2"/><rect x="390.0" y="994.7" width="2" height="2"/><rect x="420.2" y="993.1" width="2" height="2"/><rect x="486.2" y="993.1" width="2" height="2"/><rect x="301.6" y="997.6" width="2" height="2"/><rect x="313.6" y="997.6" width="2" height="2"/><rect x="313.6" y="999.2" width="2" height="2"/><rect x="328.8" y="1000.8" width="2" height="2"/><rect x="315.2" y="1002.2" width="2" height="2"/><rect x="489.1" y="1000.8" width="2" height="2"/><rect x="447.1" y="1002.2" width="2" height="2"/><rect x="450.1" y="1003.7" width="2" height="2"/><rect x="322.7" y="1005.1" width="2" height="2"/><rect x="357.2" y="1006.7" width="2" height="2"/><rect x="423.2" y="1005.1" width="2" height="2"/><rect x="315.2" y="1008.3" width="2" height="2"/><rect x="474.2" y="1009.6" width="2" height="2"/><rect x="301.6" y="1014.1" width="2" height="2"/><rect x="330.1" y="1012.8" width="2" height="2"/><rect x="325.8" y="1015.7" width="2" height="2"/><rect x="403.8" y="1015.7" width="2" height="2"/><rect x="447.1" y="1012.8" width="2" height="2"/><rect x="454.8" y="1012.8" width="2" height="2"/><rect x="505.9" y="1014.1" width="2" height="2"/><rect x="511.7" y="1012.8" width="2" height="2"/><rect x="511.7" y="1015.7" width="2" height="2"/><rect x="297.1" y="1023.2" width="2" height="2"/><rect x="307.7" y="1021.8" width="2" height="2"/><rect x="358.8" y="1020.2" width="2" height="2"/><rect x="363.1" y="1020.2" width="2" height="2"/><rect x="370.8" y="1023.2" width="2" height="2"/><rect x="382.7" y="1020.2" width="2" height="2"/><rect x="403.8" y="1020.2" width="2" height="2"/><rect x="457.7" y="1020.2" width="2" height="2"/><rect x="465.2" y="1023.2" width="2" height="2"/><rect x="297.1" y="1027.7" width="2" height="2"/><rect x="373.7" y="1027.7" width="2" height="2"/><rect x="391.8" y="1026.1" width="2" height="2"/><rect x="415.7" y="1027.7" width="2" height="2"/><rect x="421.6" y="1027.7" width="2" height="2"/><rect x="433.6" y="1029.3" width="2" height="2"/><rect x="364.7" y="1030.6" width="2" height="2"/><rect x="385.7" y="1030.6" width="2" height="2"/><rect x="510.1" y="1032.2" width="2" height="2"/><rect x="322.7" y="1035.1" width="2" height="2"/><rect x="339.1" y="1036.7" width="2" height="2"/><rect x="373.7" y="1036.7" width="2" height="2"/><rect x="487.8" y="1033.8" width="2" height="2"/><rect x="504.3" y="1036.7" width="2" height="2"/><rect x="358.8" y="1039.6" width="2" height="2"/><rect x="489.1" y="1039.6" width="2" height="2"/><rect x="502.7" y="1039.6" width="2" height="2"/><rect x="489.1" y="1042.8" width="2" height="2"/><rect x="517.8" y="1038.3" width="2" height="2"/><rect x="405.1" y="1045.7" width="2" height="2"/><rect x="441.2" y="1045.7" width="2" height="2"/><rect x="333.3" y="1047.1" width="2" height="2"/><rect x="303.2" y="1051.8" width="2" height="2"/><rect x="313.6" y="1050.0" width="2" height="2"/><rect x="328.8" y="1053.2" width="2" height="2"/><rect x="393.1" y="1050.0" width="2" height="2"/><rect x="460.7" y="1053.2" width="2" height="2"/><rect x="468.1" y="1050.0" width="2" height="2"/><rect x="505.9" y="1051.8" width="2" height="2"/><rect x="378.2" y="1057.7" width="2" height="2"/><rect x="373.7" y="1059.1" width="2" height="2"/><rect x="373.7" y="1062.2" width="2" height="2"/><rect x="348.2" y="1062.2" width="2" height="2"/><rect x="388.6" y="1062.2" width="2" height="2"/><rect x="420.2" y="1062.2" width="2" height="2"/><rect x="432.2" y="1059.1" width="2" height="2"/><rect x="450.1" y="1056.1" width="2" height="2"/><rect x="487.8" y="1059.1" width="2" height="2"/><rect x="496.8" y="1059.1" width="2" height="2"/><rect x="376.6" y="1063.6" width="2" height="2"/><rect x="405.1" y="1065.2" width="2" height="2"/><rect x="432.2" y="1065.2" width="2" height="2"/><rect x="472.6" y="1066.8" width="2" height="2"/><rect x="387.0" y="1068.1" width="2" height="2"/><rect x="313.6" y="1074.2" width="2" height="2"/><rect x="334.9" y="1072.6" width="2" height="2"/><rect x="343.7" y="1074.2" width="2" height="2"/><rect x="402.2" y="1074.2" width="2" height="2"/><rect x="418.7" y="1075.8" width="2" height="2"/><rect x="322.7" y="1078.7" width="2" height="2"/><rect x="415.7" y="1078.7" width="2" height="2"/><rect x="313.6" y="1083.2" width="2" height="2"/><rect x="321.3" y="1083.2" width="2" height="2"/><rect x="330.1" y="1083.2" width="2" height="2"/><rect x="448.7" y="1081.7" width="2" height="2"/><rect x="456.2" y="1081.7" width="2" height="2"/><rect x="487.8" y="1083.2" width="2" height="2"/><rect x="403.8" y="1084.8" width="2" height="2"/><rect x="387.0" y="1086.2" width="2" height="2"/><rect x="312.3" y="1089.1" width="2" height="2"/><rect x="412.6" y="1090.7" width="2" height="2"/><rect x="426.1" y="1089.1" width="2" height="2"/><rect x="490.7" y="1089.1" width="2" height="2"/><rect x="330.1" y="1092.3" width="2" height="2"/><rect x="388.6" y="1093.6" width="2" height="2"/><rect x="427.7" y="1093.6" width="2" height="2"/><rect x="313.6" y="1102.7" width="2" height="2"/><rect x="328.8" y="1101.3" width="2" height="2"/><rect x="333.3" y="1104.3" width="2" height="2"/><rect x="351.3" y="1101.3" width="2" height="2"/><rect x="406.7" y="1099.7" width="2" height="2"/><rect x="295.8" y="1108.8" width="2" height="2"/><rect x="301.6" y="1108.8" width="2" height="2"/><rect x="433.6" y="1107.2" width="2" height="2"/><rect x="300.3" y="1113.3" width="2" height="2"/><rect x="318.1" y="1114.6" width="2" height="2"/><rect x="358.8" y="1110.4" width="2" height="2"/><rect x="415.7" y="1114.6" width="2" height="2"/><rect x="295.8" y="1120.7" width="2" height="2"/><rect x="307.7" y="1120.7" width="2" height="2"/><rect x="340.7" y="1128.2" width="2" height="2"/><rect x="745.8" y="798.0" width="2" height="2"/><rect x="699.0" y="802.6" width="2" height="2"/><rect x="739.7" y="808.7" width="2" height="2"/><rect x="601.7" y="822.0" width="2" height="2"/><rect x="541.8" y="828.1" width="2" height="2"/><rect x="567.1" y="837.1" width="2" height="2"/><rect x="640.8" y="837.1" width="2" height="2"/><rect x="676.7" y="835.5" width="2" height="2"/><rect x="697.7" y="835.5" width="2" height="2"/><rect x="637.8" y="844.6" width="2" height="2"/><rect x="637.8" y="847.7" width="2" height="2"/><rect x="526.9" y="850.7" width="2" height="2"/><rect x="543.2" y="849.1" width="2" height="2"/><rect x="696.1" y="849.1" width="2" height="2"/><rect x="697.7" y="850.7" width="2" height="2"/><rect x="717.1" y="849.1" width="2" height="2"/><rect x="718.7" y="852.2" width="2" height="2"/><rect x="726.1" y="852.2" width="2" height="2"/><rect x="742.6" y="849.1" width="2" height="2"/><rect x="601.7" y="855.2" width="2" height="2"/><rect x="609.4" y="853.6" width="2" height="2"/><rect x="636.2" y="855.2" width="2" height="2"/><rect x="564.2" y="861.3" width="2" height="2"/><rect x="580.7" y="862.6" width="2" height="2"/><rect x="588.1" y="862.6" width="2" height="2"/><rect x="660.2" y="864.2" width="2" height="2"/><rect x="669.2" y="862.6" width="2" height="2"/><rect x="669.2" y="867.2" width="2" height="2"/><rect x="682.8" y="865.8" width="2" height="2"/><rect x="711.2" y="859.7" width="2" height="2"/><rect x="720.3" y="862.6" width="2" height="2"/><rect x="721.6" y="862.6" width="2" height="2"/><rect x="733.8" y="861.3" width="2" height="2"/><rect x="643.7" y="868.7" width="2" height="2"/><rect x="664.7" y="868.7" width="2" height="2"/><rect x="706.7" y="870.1" width="2" height="2"/><rect x="726.1" y="870.1" width="2" height="2"/><rect x="621.3" y="871.7" width="2" height="2"/><rect x="625.8" y="873.3" width="2" height="2"/><rect x="645.3" y="876.2" width="2" height="2"/><rect x="552.2" y="879.1" width="2" height="2"/><rect x="568.7" y="879.1" width="2" height="2"/><rect x="693.2" y="882.1" width="2" height="2"/><rect x="742.6" y="885.2" width="2" height="2"/><rect x="540.2" y="886.6" width="2" height="2"/><rect x="564.2" y="889.7" width="2" height="2"/><rect x="601.7" y="889.7" width="2" height="2"/><rect x="618.2" y="888.2" width="2" height="2"/><rect x="627.2" y="891.1" width="2" height="2"/><rect x="645.3" y="886.6" width="2" height="2"/><rect x="669.2" y="889.7" width="2" height="2"/><rect x="685.7" y="889.7" width="2" height="2"/><rect x="519.7" y="895.6" width="2" height="2"/><rect x="532.8" y="895.6" width="2" height="2"/><rect x="540.2" y="894.3" width="2" height="2"/><rect x="549.3" y="900.1" width="2" height="2"/><rect x="550.9" y="904.7" width="2" height="2"/><rect x="573.2" y="904.7" width="2" height="2"/><rect x="627.2" y="898.8" width="2" height="2"/><rect x="627.2" y="901.7" width="2" height="2"/><rect x="667.6" y="901.7" width="2" height="2"/><rect x="669.2" y="909.2" width="2" height="2"/><rect x="718.7" y="907.6" width="2" height="2"/><rect x="524.0" y="913.7" width="2" height="2"/><rect x="580.9" y="912.1" width="2" height="2"/><rect x="588.1" y="919.6" width="2" height="2"/><rect x="621.3" y="918.2" width="2" height="2"/><rect x="673.7" y="913.7" width="2" height="2"/><rect x="703.8" y="916.6" width="2" height="2"/><rect x="715.7" y="919.6" width="2" height="2"/><rect x="739.7" y="918.2" width="2" height="2"/><rect x="550.9" y="927.0" width="2" height="2"/><rect x="568.7" y="924.1" width="2" height="2"/><rect x="633.3" y="924.1" width="2" height="2"/><rect x="663.1" y="921.1" width="2" height="2"/><rect x="663.1" y="924.1" width="2" height="2"/><rect x="709.6" y="927.0" width="2" height="2"/><rect x="717.1" y="928.6" width="2" height="2"/><rect x="730.7" y="924.1" width="2" height="2"/><rect x="532.8" y="933.1" width="2" height="2"/><rect x="553.8" y="934.7" width="2" height="2"/><rect x="607.8" y="931.8" width="2" height="2"/><rect x="687.1" y="930.2" width="2" height="2"/><rect x="699.0" y="933.1" width="2" height="2"/><rect x="696.1" y="936.1" width="2" height="2"/><rect x="703.8" y="937.6" width="2" height="2"/><rect x="708.3" y="937.6" width="2" height="2"/><rect x="709.6" y="937.6" width="2" height="2"/><rect x="535.7" y="942.2" width="2" height="2"/><rect x="598.7" y="943.7" width="2" height="2"/><rect x="600.3" y="945.1" width="2" height="2"/><rect x="604.8" y="940.8" width="2" height="2"/><rect x="616.8" y="943.7" width="2" height="2"/><rect x="675.1" y="940.8" width="2" height="2"/><rect x="685.7" y="939.2" width="2" height="2"/><rect x="540.2" y="949.6" width="2" height="2"/><rect x="540.2" y="952.8" width="2" height="2"/><rect x="541.8" y="957.3" width="2" height="2"/><rect x="540.2" y="958.6" width="2" height="2"/><rect x="547.7" y="955.7" width="2" height="2"/><rect x="561.2" y="955.7" width="2" height="2"/><rect x="583.8" y="957.3" width="2" height="2"/><rect x="681.2" y="955.7" width="2" height="2"/><rect x="681.2" y="960.2" width="2" height="2"/><rect x="682.8" y="963.2" width="2" height="2"/><rect x="676.7" y="964.7" width="2" height="2"/><rect x="696.1" y="964.7" width="2" height="2"/><rect x="709.6" y="961.8" width="2" height="2"/><rect x="535.7" y="969.3" width="2" height="2"/><rect x="540.2" y="967.7" width="2" height="2"/><rect x="558.3" y="966.1" width="2" height="2"/><rect x="580.9" y="970.6" width="2" height="2"/><rect x="582.2" y="972.2" width="2" height="2"/><rect x="597.2" y="967.7" width="2" height="2"/><rect x="618.2" y="969.3" width="2" height="2"/><rect x="621.3" y="961.8" width="2" height="2"/><rect x="651.1" y="966.1" width="2" height="2"/><rect x="735.2" y="967.7" width="2" height="2"/><rect x="736.8" y="970.6" width="2" height="2"/><rect x="667.6" y="975.1" width="2" height="2"/><rect x="588.1" y="984.2" width="2" height="2"/><rect x="606.2" y="982.6" width="2" height="2"/><rect x="693.2" y="982.6" width="2" height="2"/><rect x="540.2" y="990.0" width="2" height="2"/><rect x="544.8" y="991.6" width="2" height="2"/><rect x="561.2" y="991.6" width="2" height="2"/><rect x="573.2" y="990.0" width="2" height="2"/><rect x="582.2" y="988.7" width="2" height="2"/><rect x="586.8" y="994.8" width="2" height="2"/><rect x="622.7" y="988.7" width="2" height="2"/><rect x="634.7" y="997.7" width="2" height="2"/><rect x="652.7" y="996.1" width="2" height="2"/><rect x="697.7" y="996.1" width="2" height="2"/><rect x="702.2" y="999.1" width="2" height="2"/><rect x="726.1" y="990.0" width="2" height="2"/><rect x="526.9" y="1003.6" width="2" height="2"/><rect x="528.3" y="1002.2" width="2" height="2"/><rect x="555.4" y="1002.2" width="2" height="2"/><rect x="528.3" y="1009.7" width="2" height="2"/><rect x="597.2" y="1011.3" width="2" height="2"/><rect x="681.2" y="1012.6" width="2" height="2"/><rect x="552.2" y="1020.1" width="2" height="2"/><rect x="577.7" y="1021.7" width="2" height="2"/><rect x="615.2" y="1020.1" width="2" height="2"/><rect x="621.3" y="1018.7" width="2" height="2"/><rect x="658.8" y="1021.7" width="2" height="2"/><rect x="664.7" y="1018.7" width="2" height="2"/><rect x="669.2" y="1017.1" width="2" height="2"/><rect x="675.1" y="1021.7" width="2" height="2"/><rect x="691.8" y="1024.6" width="2" height="2"/><rect x="700.8" y="1023.2" width="2" height="2"/><rect x="534.1" y="1029.1" width="2" height="2"/><rect x="576.1" y="1029.1" width="2" height="2"/><rect x="588.1" y="1027.8" width="2" height="2"/><rect x="592.6" y="1030.7" width="2" height="2"/><rect x="603.3" y="1026.2" width="2" height="2"/><rect x="609.4" y="1032.3" width="2" height="2"/><rect x="621.3" y="1030.7" width="2" height="2"/><rect x="711.2" y="1029.1" width="2" height="2"/><rect x="741.3" y="1032.3" width="2" height="2"/><rect x="524.0" y="1038.2" width="2" height="2"/><rect x="540.2" y="1039.7" width="2" height="2"/><rect x="547.7" y="1038.2" width="2" height="2"/><rect x="558.3" y="1041.3" width="2" height="2"/><rect x="580.9" y="1039.7" width="2" height="2"/><rect x="636.2" y="1038.2" width="2" height="2"/><rect x="639.2" y="1035.2" width="2" height="2"/><rect x="664.7" y="1044.3" width="2" height="2"/><rect x="627.2" y="1048.8" width="2" height="2"/><rect x="627.2" y="1056.2" width="2" height="2"/><rect x="573.2" y="1053.3" width="2" height="2"/><rect x="586.8" y="1053.3" width="2" height="2"/><rect x="558.3" y="1060.7" width="2" height="2"/><rect x="570.3" y="1060.7" width="2" height="2"/><rect x="576.1" y="1069.8" width="2" height="2"/><rect x="597.2" y="1066.8" width="2" height="2"/><rect x="640.8" y="1065.3" width="2" height="2"/><rect x="666.3" y="1066.8" width="2" height="2"/><rect x="929.0" y="748.7" width="2" height="2"/><rect x="921.5" y="762.0" width="2" height="2"/><rect x="935.0" y="768.1" width="2" height="2"/><rect x="944.1" y="780.1" width="2" height="2"/><rect x="919.9" y="790.7" width="2" height="2"/><rect x="922.9" y="792.1" width="2" height="2"/><rect x="965.1" y="789.1" width="2" height="2"/><rect x="972.5" y="790.7" width="2" height="2"/><rect x="873.4" y="795.0" width="2" height="2"/><rect x="874.8" y="793.6" width="2" height="2"/><rect x="759.4" y="801.1" width="2" height="2"/><rect x="819.4" y="807.0" width="2" height="2"/><rect x="837.5" y="804.0" width="2" height="2"/><rect x="881.1" y="802.7" width="2" height="2"/><rect x="894.6" y="801.1" width="2" height="2"/><rect x="908.0" y="813.1" width="2" height="2"/><rect x="753.3" y="816.0" width="2" height="2"/><rect x="756.5" y="816.0" width="2" height="2"/><rect x="775.9" y="817.6" width="2" height="2"/><rect x="768.4" y="825.0" width="2" height="2"/><rect x="791.0" y="825.0" width="2" height="2"/><rect x="875.0" y="818.9" width="2" height="2"/><rect x="931.9" y="823.7" width="2" height="2"/><rect x="942.5" y="823.7" width="2" height="2"/><rect x="957.4" y="817.6" width="2" height="2"/><rect x="754.9" y="832.5" width="2" height="2"/><rect x="825.5" y="835.6" width="2" height="2"/><rect x="856.9" y="834.1" width="2" height="2"/><rect x="855.3" y="838.6" width="2" height="2"/><rect x="893.1" y="835.6" width="2" height="2"/><rect x="931.9" y="840.2" width="2" height="2"/><rect x="942.5" y="835.6" width="2" height="2"/><rect x="939.6" y="843.1" width="2" height="2"/><rect x="780.4" y="844.4" width="2" height="2"/><rect x="828.5" y="844.4" width="2" height="2"/><rect x="935.0" y="849.0" width="2" height="2"/><rect x="940.9" y="847.6" width="2" height="2"/><rect x="756.5" y="856.6" width="2" height="2"/><rect x="825.5" y="855.1" width="2" height="2"/><rect x="849.5" y="855.1" width="2" height="2"/><rect x="902.1" y="862.5" width="2" height="2"/><rect x="831.4" y="864.1" width="2" height="2"/><rect x="772.9" y="874.5" width="2" height="2"/><rect x="774.3" y="873.1" width="2" height="2"/><rect x="796.9" y="876.1" width="2" height="2"/><rect x="812.0" y="879.0" width="2" height="2"/><rect x="825.5" y="876.1" width="2" height="2"/><rect x="872.1" y="877.6" width="2" height="2"/><rect x="881.1" y="873.1" width="2" height="2"/><rect x="963.5" y="879.0" width="2" height="2"/><rect x="972.5" y="880.6" width="2" height="2"/><rect x="940.9" y="885.1" width="2" height="2"/><rect x="942.5" y="883.5" width="2" height="2"/><rect x="768.4" y="889.6" width="2" height="2"/><rect x="766.8" y="892.5" width="2" height="2"/><rect x="831.4" y="895.5" width="2" height="2"/><rect x="888.5" y="894.1" width="2" height="2"/><rect x="751.9" y="900.0" width="2" height="2"/><rect x="793.9" y="901.6" width="2" height="2"/><rect x="935.0" y="907.7" width="2" height="2"/><rect x="756.5" y="912.2" width="2" height="2"/><rect x="803.0" y="913.5" width="2" height="2"/><rect x="960.6" y="913.5" width="2" height="2"/><rect x="922.9" y="916.7" width="2" height="2"/><rect x="779.0" y="919.6" width="2" height="2"/><rect x="945.4" y="918.0" width="2" height="2"/><rect x="987.4" y="919.6" width="2" height="2"/><rect x="762.3" y="922.6" width="2" height="2"/><rect x="906.4" y="924.1" width="2" height="2"/><rect x="959.0" y="922.6" width="2" height="2"/><rect x="803.0" y="928.7" width="2" height="2"/><rect x="822.4" y="927.1" width="2" height="2"/><rect x="945.4" y="925.7" width="2" height="2"/><rect x="949.9" y="927.1" width="2" height="2"/><rect x="968.0" y="927.1" width="2" height="2"/><rect x="978.4" y="927.1" width="2" height="2"/><rect x="754.9" y="937.7" width="2" height="2"/><rect x="796.9" y="936.1" width="2" height="2"/><rect x="808.8" y="939.0" width="2" height="2"/><rect x="875.0" y="934.5" width="2" height="2"/><rect x="926.0" y="933.2" width="2" height="2"/><rect x="750.6" y="943.6" width="2" height="2"/><rect x="768.4" y="942.2" width="2" height="2"/><rect x="770.0" y="948.1" width="2" height="2"/><rect x="770.0" y="949.7" width="2" height="2"/><rect x="784.9" y="948.1" width="2" height="2"/><rect x="849.5" y="943.6" width="2" height="2"/><rect x="935.0" y="942.2" width="2" height="2"/><rect x="825.5" y="951.2" width="2" height="2"/><rect x="881.1" y="951.2" width="2" height="2"/><rect x="897.6" y="951.2" width="2" height="2"/><rect x="974.1" y="951.2" width="2" height="2"/><rect x="978.4" y="946.7" width="2" height="2"/><rect x="987.4" y="945.1" width="2" height="2"/><rect x="816.5" y="966.1" width="2" height="2"/><rect x="873.4" y="969.1" width="2" height="2"/><rect x="913.8" y="969.1" width="2" height="2"/><rect x="936.4" y="966.1" width="2" height="2"/><rect x="945.4" y="963.2" width="2" height="2"/><rect x="978.4" y="964.6" width="2" height="2"/><rect x="784.9" y="978.1" width="2" height="2"/><rect x="803.0" y="976.8" width="2" height="2"/><rect x="813.6" y="976.8" width="2" height="2"/><rect x="824.0" y="975.2" width="2" height="2"/><rect x="947.0" y="976.8" width="2" height="2"/><rect x="960.6" y="973.6" width="2" height="2"/><rect x="784.9" y="985.8" width="2" height="2"/><rect x="774.3" y="990.1" width="2" height="2"/><rect x="754.9" y="996.2" width="2" height="2"/><rect x="771.4" y="1000.7" width="2" height="2"/><rect x="771.4" y="1003.6" width="2" height="2"/><rect x="876.6" y="991.7" width="2" height="2"/><rect x="881.1" y="994.8" width="2" height="2"/><rect x="825.5" y="1028.0" width="2" height="2"/><rect x="1016.0" y="745.6" width="2" height="2"/><rect x="1002.5" y="774.0" width="2" height="2"/><rect x="1041.3" y="775.9" width="2" height="2"/><rect x="1078.9" y="766.5" width="2" height="2"/><rect x="1089.4" y="781.7" width="2" height="2"/><rect x="1089.4" y="787.7" width="2" height="2"/><rect x="1092.4" y="798.2" width="2" height="2"/><rect x="1110.3" y="789.1" width="2" height="2"/><rect x="1123.8" y="747.0" width="2" height="2"/><rect x="1067.1" y="808.6" width="2" height="2"/><rect x="1017.6" y="825.1" width="2" height="2"/><rect x="1023.7" y="825.1" width="2" height="2"/><rect x="1025.0" y="825.1" width="2" height="2"/><rect x="1035.5" y="823.7" width="2" height="2"/><rect x="1091.0" y="823.7" width="2" height="2"/><rect x="1119.4" y="834.2" width="2" height="2"/><rect x="1148.0" y="841.6" width="2" height="2"/><rect x="1054.7" y="843.0" width="2" height="2"/><rect x="1068.2" y="849.0" width="2" height="2"/><rect x="1065.2" y="853.7" width="2" height="2"/><rect x="1047.3" y="855.1" width="2" height="2"/><rect x="1026.4" y="855.1" width="2" height="2"/><rect x="1030.8" y="867.2" width="2" height="2"/><rect x="1044.3" y="865.5" width="2" height="2"/><rect x="1099.8" y="846.0" width="2" height="2"/><rect x="1099.8" y="850.7" width="2" height="2"/><rect x="1131.2" y="859.8" width="2" height="2"/><rect x="990.7" y="868.6" width="2" height="2"/><rect x="1011.6" y="876.3" width="2" height="2"/><rect x="1026.4" y="882.0" width="2" height="2"/><rect x="1005.5" y="885.1" width="2" height="2"/><rect x="1101.2" y="891.1" width="2" height="2"/><rect x="1116.3" y="897.2" width="2" height="2"/><rect x="1132.8" y="902.9" width="2" height="2"/><rect x="1148.0" y="909.0" width="2" height="2"/><rect x="1156.8" y="888.1" width="2" height="2"/><rect x="1026.4" y="910.7" width="2" height="2"/><rect x="1045.7" y="906.0" width="2" height="2"/><rect x="1016.0" y="925.5" width="2" height="2"/><rect x="1062.2" y="924.1" width="2" height="2"/><rect x="1044.3" y="933.2" width="2" height="2"/><rect x="1039.9" y="940.6" width="2" height="2"/><rect x="1057.8" y="945.0" width="2" height="2"/><rect x="1027.8" y="952.5" width="2" height="2"/><rect x="1077.3" y="954.1" width="2" height="2"/><rect x="1053.4" y="961.5" width="2" height="2"/><rect x="1110.3" y="960.2" width="2" height="2"/><rect x="1117.7" y="957.1" width="2" height="2"/><rect x="1134.2" y="955.5" width="2" height="2"/><rect x="1167.2" y="939.0" width="2" height="2"/><rect x="1185.4" y="723.1" width="2" height="2"/><rect x="1242.6" y="727.5" width="2" height="2"/><rect x="1266.5" y="724.5" width="2" height="2"/><rect x="1310.0" y="703.6" width="2" height="2"/><rect x="1324.8" y="709.6" width="2" height="2"/><rect x="1362.2" y="715.7" width="2" height="2"/><rect x="1393.8" y="734.9" width="2" height="2"/><rect x="1251.7" y="754.4" width="2" height="2"/><rect x="1371.3" y="759.1" width="2" height="2"/><rect x="1194.4" y="768.2" width="2" height="2"/><rect x="1200.8" y="780.0" width="2" height="2"/><rect x="1211.2" y="780.0" width="2" height="2"/><rect x="1212.6" y="786.1" width="2" height="2"/><rect x="1220.0" y="786.1" width="2" height="2"/><rect x="1234.9" y="772.6" width="2" height="2"/><rect x="1244.0" y="778.6" width="2" height="2"/><rect x="1194.4" y="808.6" width="2" height="2"/><rect x="1183.7" y="822.1" width="2" height="2"/><rect x="1215.3" y="817.7" width="2" height="2"/><rect x="1261.8" y="820.7" width="2" height="2"/><rect x="1275.3" y="820.7" width="2" height="2"/><rect x="1344.3" y="808.6" width="2" height="2"/><rect x="1387.8" y="798.2" width="2" height="2"/><rect x="1332.5" y="843.0" width="2" height="2"/><rect x="1188.4" y="864.2" width="2" height="2"/><rect x="1255.8" y="865.5" width="2" height="2"/><rect x="1255.8" y="876.3" width="2" height="2"/><rect x="1299.5" y="862.5" width="2" height="2"/><rect x="1345.7" y="877.6" width="2" height="2"/><rect x="1432.9" y="870.2" width="2" height="2"/><rect x="1250.0" y="916.7" width="2" height="2"/><rect x="1254.4" y="925.5" width="2" height="2"/></g>
<polyline clip-path="url(#pc)" points="69.7,540.4 83.7,419.3 90.7,433.4 96.9,458.8 104.8,444.8 110.6,545.7 118.3,436 125.8,469.3 131.6,473.7 145.1,436.9 152.5,432.5 159.7,436.9 174.1,466.4 194.3,457 200.4,469.3 215.3,443.9 221.5,479.9 229.4,436.9 241.7,505.3 250.5,516.7 256.6,469.3 264.5,494.8 271.5,503.6 284.7,479.9 298.2,537.8 305.7,460.6 311.9,490.4 318.9,486 326.8,463.2 333,513.2 340.9,516.7 347.9,497.4 354,525.5 361.4,475.1 368.8,584.8 374.6,498.8 382.1,482.7 388.3,569.9 403.5,462.8 416.7,567.3 424.6,460.2 430.4,562 443.9,493.5 455.3,503.2 465,513.7 472.3,551.5 485.5,510.2 493.6,574.3 499.2,515.5 506.7,506.7 514.1,532.2 527.8,497.9 534.3,516.4 549.2,540.9 562.4,461.9 575.6,569 582.6,570.8 591.4,527.8 597.1,534.8 604.2,606.8 610.7,578.7 625.6,548.8 631.7,553.2 638.8,578.7 646.6,578.7 652.4,559 659.9,580 666.9,570 673.6,580.4 681,576.5 687.1,566.5 694.1,569.5 701.2,566.5 707.3,573.9 715.2,639.7 727.5,582.7 736.3,571.2 742.4,587 753.8,587.9 762.6,587 769.6,595.8 778.4,612.5 784.5,556.3 791.6,596.7 797.7,601.1 805.6,590.6 812.6,589.3 826.7,656.4 834.2,609 839,619.5 847.4,666.9 860.9,574.8 874.1,673.9 882,628.3 889.3,679.2 895.7,628.3 903,671.3 910.4,640.6 916.7,688 923.7,688 929.9,635.3 937.6,696.8 945.2,680.9 958.3,603.9 969.9,649.2 979.3,694 985.4,634.2 992.9,654.8 1000.2,704.9 1006.4,706.7 1013.8,672.5 1021.3,680.9 1027.5,664.1 1035,696.8 1040.9,687.5 1048.4,723.9 1055.9,666 1062,692.1 1069.9,692.1 1077.4,699.6 1082.4,746.4 1089.5,740.7 1104.1,690.3 1111.6,725.8 1117.6,718.3 1132.5,770.7 1138.1,775.3 1145.6,731.4 1152.1,749.2 1159.6,749.2 1167.1,728.6 1180.2,790.9 1187,787.5 1194.6,786.7 1201.4,761.2 1209,791.8 1215.5,768.8 1221.8,771.4 1228.5,768.8 1243.8,807 1249.4,785.5 1256.9,805.3 1264.2,785 1271,778.2 1276.9,793.5 1284,827.4 1292.2,816.4 1299,813 1304.9,838.4 1312.5,817.2 1319.8,836.7 1326.1,827.4 1333.8,835 1339.7,818.1 1346.5,843.5 1354.6,840.1 1360.1,854.5 1368.2,858.8 1375.3,889.3 1381.3,896.1 1389.8,880.8 1394.8,882.5 1402.1,897.8 1410.1,856.2 1416,911.4 1422.8,908 1431,898.7 1437.3,935.1 1444.6,911.4 1452.5,932.6" fill="none" stroke="#00ade6" stroke-width="1.45" stroke-linejoin="miter" stroke-miterlimit="3"/>
</svg>
<div class="ax" style="left:68.5px;top:240px">MB/s</div>
<div class="ax" style="left:1430px;top:240px">ms</div>
<div class="ax" style="left:34.2px;top:248.5px">250</div>
<div class="ax" style="left:34.2px;top:456.5px">200</div>
<div class="ax" style="left:34.2px;top:664.5px">150</div>
<div class="ax" style="left:34.2px;top:872.5px">100</div>
<div class="ax" style="left:43.2px;top:1080.5px">50</div>
<div class="ax" style="left:1459px;top:249px">50</div>
<div class="ax" style="left:1459px;top:457px">40</div>
<div class="ax" style="left:1459px;top:665px">30</div>
<div class="ax" style="left:1459px;top:873px">20</div>
<div class="ax" style="left:1459px;top:1081px">10</div>

<!-- right panel -->
<div class="a" style="left:1519px;top:227px;width:129px;height:42px;background:#fdfdfd;border:2px solid #1a7ad4;border-radius:5px"></div>
<div class="t" style="left:1565px;top:238px;font-size:18px">开始</div>
<div class="sep" style="top:289px"></div>
<div class="a" style="left:1512.5px;top:305px;width:20px;height:20px;border-radius:50%;background:#005fb8"></div>
<div class="a" style="left:1519px;top:311.5px;width:7px;height:7px;border-radius:50%;background:#fff"></div>
<div class="t lbl" style="left:1537px;top:306px">读取</div>
<div class="a" style="left:1512.5px;top:336.5px;width:20px;height:20px;border-radius:50%;background:#f3f3f3;border:1.3px solid #5a5a5a"></div>
<div class="t lbl" style="left:1537px;top:338px">写入</div>
<div class="sep" style="top:365px"></div>
<div class="a" style="left:1512.5px;top:384.5px;width:20px;height:19.5px;border-radius:4px;background:#f3f3f3;border:1.3px solid #5a5a5a"></div>
<div class="t lbl" style="left:1537px;top:386px">快捷行程</div>
<div class="a" style="left:1513.5px;top:419px;width:107px;height:38.5px;background:#f9f9f9;border:1px solid #e6e6e6"></div>
<div class="a" style="left:1594px;top:419px;width:27px;height:38.5px;background:#f0f0f0;border:1.3px solid #b6bcc4"></div>
<div class="a" style="left:1596.5px;top:422px;width:21px;height:15px;background:#ececec;border:1px solid #e0e0e0"></div>
<div class="a" style="left:1596.5px;top:439px;width:21px;height:15.5px;background:#ececec;border:1px solid #e0e0e0"></div>
<svg class="a" style="left:1601px;top:425px" width="12" height="28" viewBox="0 0 12 28"><path d="M2 6h8L6 1.5z M2 19h8L6 23.5z" fill="#777"/></svg>
<div class="t" style="left:1518.5px;top:428px;font-size:18px;color:#808080">40</div>
<div class="t" style="left:1642px;top:430px;font-size:18px">gB</div>
<div class="chk" style="top:480.5px"><svg width="20" height="20" viewBox="0 0 20 20"><path d="M5.2 10.6l3.2 3.1L14.8 7.3" stroke="#e4eefa" stroke-width="1.15" fill="none"/></svg></div>
<div class="t lbl" style="left:1537px;top:482px">传输速率</div>
<div class="sep" style="top:506px"></div>
<div class="t lbl" style="left:1513px;top:516px">最低</div>
<div class="box" style="top:540.5px"><div class="val" style="color:#00c0ff">87.0 <span class="blk"></span>B/s</div></div>
<div class="t lbl" style="left:1513px;top:581px">最高</div>
<div class="box" style="top:605.5px"><div class="val" style="color:#00c0ff">211.2 <span class="blk"></span>B/s</div></div>
<div class="t lbl" style="left:1513px;top:641px">平均</div>
<div class="box" style="top:665.5px"><div class="val" style="color:#00c0ff">161.6 <span class="blk"></span>B/s</div></div>
<div class="sep" style="top:710px"></div>
<div class="chk" style="top:725px"><svg width="20" height="20" viewBox="0 0 20 20"><path d="M5.2 10.6l3.2 3.1L14.8 7.3" stroke="#e4eefa" stroke-width="1.15" fill="none"/></svg></div>
<div class="t lbl" style="left:1537px;top:726px">存取时间</div>
<div class="box" style="top:751px"><div class="val" style="color:#ffff00">15.8 <span class="blk" style="width:9px;height:8.5px"></span>s</div></div>
<div class="chk" style="top:792.5px"><svg width="20" height="20" viewBox="0 0 20 20"><path d="M5.2 10.6l3.2 3.1L14.8 7.3" stroke="#e4eefa" stroke-width="1.15" fill="none"/></svg></div>
<div class="t lbl" style="left:1537px;top:794px">突发传输速率</div>
<div class="box" style="top:818.5px"><div class="val" style="color:#fff">234.2 <span class="blk"></span>B/s</div></div>
<div class="t lbl" style="left:1513px;top:857px">CPU 占用率</div>
<div class="box" style="top:883px"><div class="val" style="color:#fff">0.8%</div></div>
<div class="t lbl" style="left:1513px;top:944px">通行数</div>
<div class="a" style="left:1514px;top:968px;width:135px;height:38px;background:#fff;border:1px solid #e8e8e8;border-bottom:2px solid #8a8a8a"></div>
<div class="a" style="left:1622.5px;top:968px;width:27px;height:38px;background:#f0f0f0;border:1.3px solid #b6bcc4"></div>
<div class="a" style="left:1625px;top:971px;width:21px;height:15.5px;background:#e8e8e8;border:1px solid #d0d0d0"></div>
<div class="a" style="left:1625px;top:988.5px;width:21px;height:15.5px;background:#e8e8e8;border:1px solid #d0d0d0"></div>
<svg class="a" style="left:1629.5px;top:975px" width="12" height="28" viewBox="0 0 12 28"><path d="M1.5 6h9L6 1.5z M1.5 19h9L6 23.5z" fill="#111"/></svg>
<div class="t" style="left:1519px;top:977px;font-size:18px">1</div>
<div class="a" style="left:1513px;top:1022px;width:94px;height:25px;background:#03aa24;border:1px solid #c8c8c8"></div>
<div class="t" style="left:1619px;top:1026px;font-size:18px">1/1</div>
</body></html>
